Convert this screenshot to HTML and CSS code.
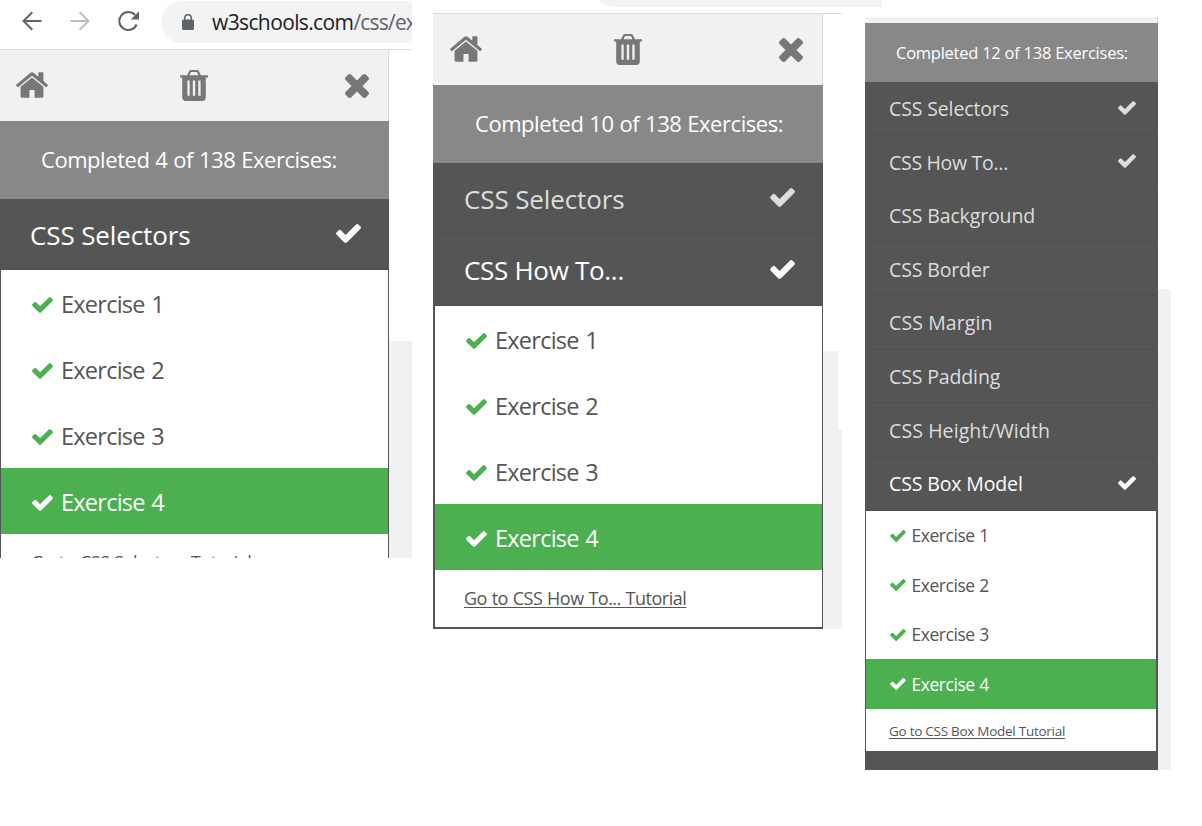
FILE: index.html
```html
<!DOCTYPE html>
<html lang="en">
<head>
<meta charset="utf-8">
<title>CSS Exercises</title>
<link rel="stylesheet" href="styles.css">
</head>
<body>
<svg class="defs" width="0" height="0" aria-hidden="true">
  <symbol id="check" viewBox="121 334 1550 1188"><path d="M1671 566q0 40-28 68l-724 724-136 136q-28 28-68 28t-68-28l-136-136-362-362q-28-28-28-68t28-68l136-136q28-28 68-28t68 28l294 295 656-657q28-28 68-28t68 28l136 136q28 28 28 68z"/></symbol>
  <symbol id="home" viewBox="89 253 1614 1283"><path d="M1472 992v480q0 26-19 45t-45 19h-384v-384h-256v384h-384q-26 0-45-19t-19-45v-480q0-1 .5-3t.5-3l575-474 575 474q1 2 1 6zm223-69l-62 74q-8 9-21 11h-3q-13 0-21-7l-692-577-692 577q-12 8-24 7-13-2-21-11l-62-74q-8-10-7-23.5t11-21.5l719-599q32-26 76-26t76 26l244 204v-195q0-14 9-23t23-9h192q14 0 23 9t9 23v408l219 182q10 8 11 21.5t-7 23.5z"/></symbol>
  <symbol id="trash" viewBox="0 0 28 31"><path fill-rule="evenodd" d="M0 5.2h7.2L9 1.300Q9.600 0 11 0h6q1.400 0 2 1.300l1.800 3.900H28v2.200h-2.200V27q0 4-3.600 4H5.800q-3.600 0-3.600-4V7.400H0zM9.600 5.200h8.800l-1.100-2.700q-.2-.5-.8-.5h-5q-.6 0-.8.500zM7.400 10.500v15.300h2.300V10.500zM12.800 10.500v15.300h2.400V10.500zM18.300 10.500v15.300h2.300V10.500z"/></symbol>
  <symbol id="times" viewBox="302 366 1188 1188"><path d="M1490 1322q0 40-28 68l-136 136q-28 28-68 28t-68-28l-294-294-294 294q-28 28-68 28t-68-28l-136-136q-28-28-28-68t28-68l294-294-294-294q-28-28-28-68t28-68l136-136q28-28 68-28t68 28l294 294 294-294q28-28 68-28t68 28l136 136q28 28 28 68t-28 68l-294 294 294 294q28 28 28 68z"/></symbol>
</svg>
<main class="page">
  <section class="shot shot-one">
    <header class="browser">
      <svg class="nav-icon" viewBox="0 0 20 20"><path d="M19.500 10H2M10.300 1.200 1.500 10l8.800 8.800"/></svg>
      <svg class="nav-icon forward" viewBox="0 0 20 20"><path d="M.5 10H18M9.700 1.200l8.800 8.800-8.800 8.800"/></svg>
      <svg class="nav-icon reload" viewBox="0 0 22 20"><path d="M18.600 13.500A9 9 0 1 1 17 4"/><path class="tip" d="M21 .3v8.200h-8.200z"/></svg>
      <div class="address">
        <svg class="lock" viewBox="0 0 12 16"><path fill-rule="evenodd" d="M2 5.500V4a4 4 0 0 1 8 0v1.500h.5Q12 5.500 12 7v7.500q0 1.500-1.500 1.500h-9Q0 16 0 14.500V7q0-1.500 1.500-1.500zM3.500 5.500h5V4a2.500 2.500 0 0 0-5 0z"/></svg>
        <span class="url">w3schools.com<span class="path">/css/ex</span></span>
      </div>
    </header>
    <div class="viewport">
      <aside class="panel">
        <div class="tools"><svg class="home"><use href="#home"/></svg><svg class="trash"><use href="#trash"/></svg><svg class="times"><use href="#times"/></svg></div>
        <div class="completed"><span>Completed 4 of 138 Exercises:</span></div>
        <div class="topics">
          <div class="topic active"><span>CSS Selectors</span><svg><use href="#check"/></svg></div>
          <div class="exercises">
            <div class="exercise"><svg><use href="#check"/></svg><span>Exercise 1</span></div>
            <div class="exercise"><svg><use href="#check"/></svg><span>Exercise 2</span></div>
            <div class="exercise"><svg><use href="#check"/></svg><span>Exercise 3</span></div>
            <div class="exercise current"><svg><use href="#check"/></svg><span>Exercise 4</span></div>
            <div class="tutorial"><a>Go to CSS Selectors Tutorial</a></div>
          </div>
        </div>
      </aside>
      <div class="gutter"></div>
    </div>
  </section>

  <section class="shot shot-two">
    <header class="browser-edge"><div class="address-edge"></div></header>
    <div class="viewport">
      <aside class="panel">
        <div class="tools"><svg class="home"><use href="#home"/></svg><svg class="trash"><use href="#trash"/></svg><svg class="times"><use href="#times"/></svg></div>
        <div class="completed"><span>Completed 10 of 138 Exercises:</span></div>
        <div class="topics">
          <div class="topic"><span>CSS Selectors</span><svg><use href="#check"/></svg></div>
          <div class="topic active"><span class="how">CSS How To...</span><svg><use href="#check"/></svg></div>
          <div class="exercises">
            <div class="exercise"><svg><use href="#check"/></svg><span>Exercise 1</span></div>
            <div class="exercise"><svg><use href="#check"/></svg><span>Exercise 2</span></div>
            <div class="exercise"><svg><use href="#check"/></svg><span>Exercise 3</span></div>
            <div class="exercise current"><svg><use href="#check"/></svg><span>Exercise 4</span></div>
            <div class="tutorial"><a>Go to CSS How To... Tutorial</a></div>
          </div>
        </div>
      </aside>
      <div class="gutter"><div class="gutter-narrow"></div><div class="gutter-wide"></div></div>
    </div>
  </section>

  <section class="shot shot-three">
    <div class="viewport">
      <aside class="panel">
        <div class="tools"></div>
        <div class="completed"><span>Completed 12 of 138 Exercises:</span></div>
        <div class="topics">
          <div class="topic"><span>CSS Selectors</span><svg><use href="#check"/></svg></div>
          <div class="topic"><span class="how">CSS How To...</span><svg><use href="#check"/></svg></div>
          <div class="topic"><span>CSS Background</span></div>
          <div class="topic"><span>CSS Border</span></div>
          <div class="topic"><span class="wide">CSS Margin</span></div>
          <div class="topic"><span>CSS Padding</span></div>
          <div class="topic"><span class="wide">CSS Height/Width</span></div>
          <div class="topic active"><span>CSS Box Model</span><svg><use href="#check"/></svg></div>
          <div class="exercises">
            <div class="exercise"><svg><use href="#check"/></svg><span>Exercise 1</span></div>
            <div class="exercise"><svg><use href="#check"/></svg><span>Exercise 2</span></div>
            <div class="exercise"><svg><use href="#check"/></svg><span>Exercise 3</span></div>
            <div class="exercise current"><svg><use href="#check"/></svg><span>Exercise 4</span></div>
            <div class="tutorial"><a>Go to CSS Box Model Tutorial</a></div>
          </div>
        </div>
      </aside>
      <div class="gutter"></div>
    </div>
  </section>
</main>
</body>
</html>
```
FILE: styles.css
```css
* { box-sizing: border-box; }
body {
  margin: 0;
  background: #fff;
  font-family: "Open Sans", "Noto Sans", sans-serif;
  color: #555;
  overflow: hidden;
}
svg { display: block; flex: none; fill: currentColor; }
.defs { position: absolute; }
.page { display: flex; align-items: flex-start; height: 826px; }
.shot { flex: none; display: flex; flex-direction: column; white-space: nowrap; }
.viewport { display: flex; flex: 1; min-height: 0; }
.panel { display: flex; flex-direction: column; flex: none; }

.shot-one { width: 412px; height: 558px; overflow: hidden; }
.shot-two { width: 409px; height: 629px; margin-left: 21px; }
.shot-three { width: 306px; height: 753px; margin: 17px 0 0 23px; }
.shot-one .panel { width: 389px; }
.shot-two .panel { width: 390px; }
.shot-three .panel { width: 293px; }

/* Browser bar */
.browser { display: flex; align-items: flex-start; height: 50px; padding-left: 22px; border-bottom: 1px solid #dadce0; flex: none; }
.nav-icon { width: 20px; height: 20px; margin: 11px 28px 0 0; fill: none; stroke: #5f6368; stroke-width: 2; color: #5f6368; }
.forward { stroke: #bdbfc1; }
.reload { width: 22px; margin-right: 21px; }
.reload .tip { fill: #5f6368; stroke: none; }
.address { display: flex; flex: 1; min-width: 0; height: 42px; margin-top: 1px; padding-left: 21px; align-items: center; border-radius: 21px 0 0 21px; background: #f1f3f4; overflow: hidden; }
.lock { width: 12px; height: 16px; color: #5f6368; }
.url { margin-left: 18px; font-size: 21px; letter-spacing: -.62px; color: #202124; }
.path { color: #5f6368; letter-spacing: -.8px; }
.browser-edge { height: 14px; border-bottom: 1px solid #dadada; flex: none; }
.address-edge { width: 282px; height: 7px; margin-left: 167px; background: #f1f3f4; border-bottom-left-radius: 16px 7px; }

/* Toolbar */
.tools { display: flex; align-items: flex-start; height: 71px; background: #f1f1f1; color: #777; border-right: 1px solid #d8d8d8; flex: none; }
.home { width: 32px; height: 26px; margin: 22px 0 0 16px; }
.trash { width: 28px; height: 31px; margin: 20px 0 0 132px; }
.times { width: 24px; height: 24px; margin: 24px 0 0 137px; }
.shot-two .home { margin-left: 17px; }

/* Progress heading */
.completed { display: flex; align-items: center; height: 78px; padding: 0 0 2px 41px; background: #888; color: #fff; font-size: 22px; letter-spacing: -.45px; word-spacing: .6px; flex: none; }
.shot-two .completed { padding-left: 42px; }

/* Topics */
.topics { flex: 1; background: #555; }
.topic { display: flex; align-items: center; justify-content: space-between; height: 71px; padding: 0 28px 0 30px; border-bottom: 1px solid #4f4f4f; color: #ddd; font-size: 26px; letter-spacing: -.12px; }
.topic span { padding-top: 2px; }
.topic .how { padding-top: 0; letter-spacing: -.3px; }
.topic svg { width: 25px; height: 19px; margin-bottom: 1px; }
.topic.active { color: #fff; }
.exercises { margin: 0 1px; background: #fff; }
.exercise { display: flex; align-items: center; height: 66px; padding: 3px 0 0 31px; font-size: 23.500px; letter-spacing: -.75px; word-spacing: 1.200px; }
.exercise svg { width: 21px; height: 16px; margin-right: 8px; color: #4caf50; }
.exercise span { padding-bottom: 2px; }
.exercise.current { background: #4caf50; color: #fff; }
.exercise.current svg { color: #fff; }
.tutorial { display: flex; align-items: center; height: 57px; padding: 0 0 1px 30px; font-size: 18px; letter-spacing: -.5px; word-spacing: .6px; }
.tutorial a { text-decoration: underline; text-decoration-thickness: 1px; text-underline-offset: 2px; }
.gutter { flex: 1; background: #f1f1f1; margin-top: 291px; }

.shot-two .topics { padding: 0 1px 0 2px; }
.shot-two .topic { padding-left: 29px; padding-right: 27px; }
.shot-two .topic.active { height: 72px; }
.shot-two .exercises { margin: 0; }
.shot-two .tutorial { padding-left: 29px; }
.shot-two .gutter { display: flex; flex-direction: column; margin-top: 337px; background: none; }
.gutter-narrow { width: 15px; height: 79px; background: #f1f1f1; }
.gutter-wide { flex: 1; background: #f1f1f1; }

/* Compact panel */
.shot-three .tools { height: 6px; }
.shot-three .completed { height: 59px; padding: 0 0 0 31px; font-size: 16.500px; letter-spacing: -.25px; word-spacing: 0; }
.shot-three .topics { padding: 0 2px 0 1px; }
.shot-three .topic { height: 53.700px; padding: 0 20px 0 23px; font-size: 19.500px; letter-spacing: -.13px; }
.shot-three .topic:first-child { height: 53px; }
.shot-three .topic span { padding-top: 1px; }
.shot-three .topic .how { padding-top: 2px; letter-spacing: -.3px; }
.shot-three .topic .wide { letter-spacing: .1px; }
.shot-three .topic svg { width: 18px; height: 14px; margin-bottom: 1px; }
.shot-three .exercises { margin: 0; }
.shot-three .exercise { height: 49.500px; padding: 0 0 0 24px; font-size: 17.500px; letter-spacing: -.45px; word-spacing: .5px; }
.shot-three .exercise svg { width: 16px; height: 12px; margin-right: 5.500px; }
.shot-three .exercise span { padding-bottom: 1px; }
.shot-three .tutorial { height: 42px; padding: 2px 0 0 23px; font-size: 13.500px; letter-spacing: -.27px; word-spacing: 0; }
.shot-three .gutter { margin-top: 272px; }
```
